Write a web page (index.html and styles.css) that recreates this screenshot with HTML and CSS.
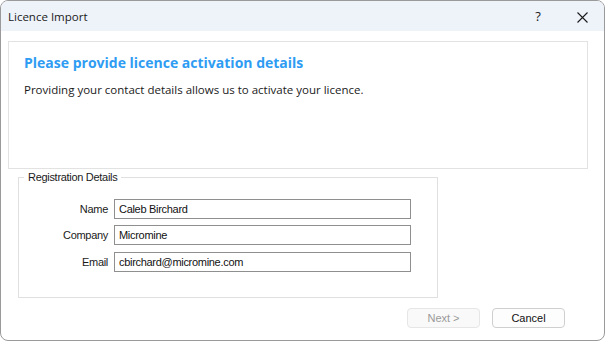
FILE: index.html
```html
<!DOCTYPE html>
<html lang="en">
<head>
  <meta charset="UTF-8">
  <title>Licence Import</title>
  <link rel="stylesheet" href="styles.css">
</head>
<body>
  <div class="window">

    <!-- Title bar -->
    <div class="titlebar">
      <span class="title">Licence Import</span>
      <span class="title-btn help">?</span>
      <span class="title-btn close">
        <svg width="11" height="11" viewBox="0 0 11 11">
          <path d="M0.5 0.5 L10.5 10.5 M10.5 0.5 L0.5 10.5" stroke="#1a1a1a" stroke-width="1.1" fill="none"/>
        </svg>
      </span>
    </div>

    <div class="content">
      <!-- Header panel -->
      <div class="panel">
        <h1 class="heading">Please provide licence activation details</h1>
        <p class="subtext">Providing your contact details allows us to activate your licence.</p>
      </div>

      <!-- Registration details -->
      <fieldset class="group">
        <legend>Registration Details</legend>
        <div class="row">
          <label>Name</label>
          <input type="text" value="Caleb Birchard">
        </div>
        <div class="row">
          <label>Company</label>
          <input type="text" value="Micromine">
        </div>
        <div class="row">
          <label>Email</label>
          <input type="text" value="cbirchard@micromine.com">
        </div>
      </fieldset>

      <!-- Buttons -->
      <div class="buttons">
        <button class="btn" disabled>Next &gt;</button>
        <button class="btn">Cancel</button>
      </div>
    </div>

  </div>
</body>
</html>
```

FILE: styles.css
```css
html, body {
  margin: 0;
  padding: 0;
  background: #fff;
}

.window {
  width: 605px;
  height: 341px;
  box-sizing: border-box;
  border: 1px solid #9a9a9a;
  border-radius: 8px;
  overflow: hidden;
  background: #fff;
  font-family: "Open Sans", "Noto Sans", sans-serif;
}

.titlebar {
  height: 30px;
  background: #eef2f9;
  display: flex;
  align-items: center;
  padding-left: 7px;
  font-size: 11.5px;
  color: #1a1a1a;
}

.title {
  flex: 1;
}

.title-btn {
  width: 46px;
  text-align: center;
  font-size: 13px;
}

.help {
  margin-right: -3px;
}

.close {
  display: flex;
  justify-content: center;
  padding: 2px 0 0 3px;
  box-sizing: border-box;
}

.content {
  padding: 10px 0 0 7px;
}

.panel {
  width: 578px;
  height: 126px;
  border: 1px solid #e2e2e2;
}

.heading {
  margin: 11px 0 0 15px;
  font-size: 14px;
  font-weight: bold;
  color: #2f9cf3;
}

.subtext {
  margin: 10px 0 0 15px;
  font-size: 11.5px;
  color: #1a1a1a;
}

.group {
  margin: 2px 0 0 10px;
  width: 420px;
  height: 127px;
  box-sizing: border-box;
  border: 1px solid #e0e0e0;
  padding: 16px 0 0 0;
  font-family: "Liberation Sans", Arial, sans-serif;
  font-size: 11px;
  letter-spacing: -0.3px;
  color: #1a1a1a;
}

.group legend {
  margin-left: 5px;
  padding: 0 4px;
}

.row {
  display: flex;
  align-items: center;
  margin-bottom: 6px;
}

.row + .row + .row {
  margin-top: 7px;
}

.row label {
  width: 89px;
  text-align: right;
  margin-right: 6px;
}

.row input {
  width: 297px;
  height: 20px;
  box-sizing: border-box;
  border: 1px solid #8f8f8f;
  padding: 0 4px;
  font-family: "Liberation Sans", Arial, sans-serif;
  font-size: 11px;
  letter-spacing: -0.3px;
  color: #111;
  margin: 0;
}

.buttons {
  display: flex;
  justify-content: flex-end;
  gap: 12px;
  margin: 10px 39px 0 0;
}

.btn {
  width: 73px;
  height: 20px;
  border: 1px solid #cfcfcf;
  border-radius: 4px;
  background: #fdfdfd;
  font-family: "Liberation Sans", Arial, sans-serif;
  font-size: 11px;
  color: #111;
  padding: 0;
}

.btn:disabled {
  background: #f9f9f9;
  border-color: #e6e6e6;
  color: #9a9a9a;
}
```
